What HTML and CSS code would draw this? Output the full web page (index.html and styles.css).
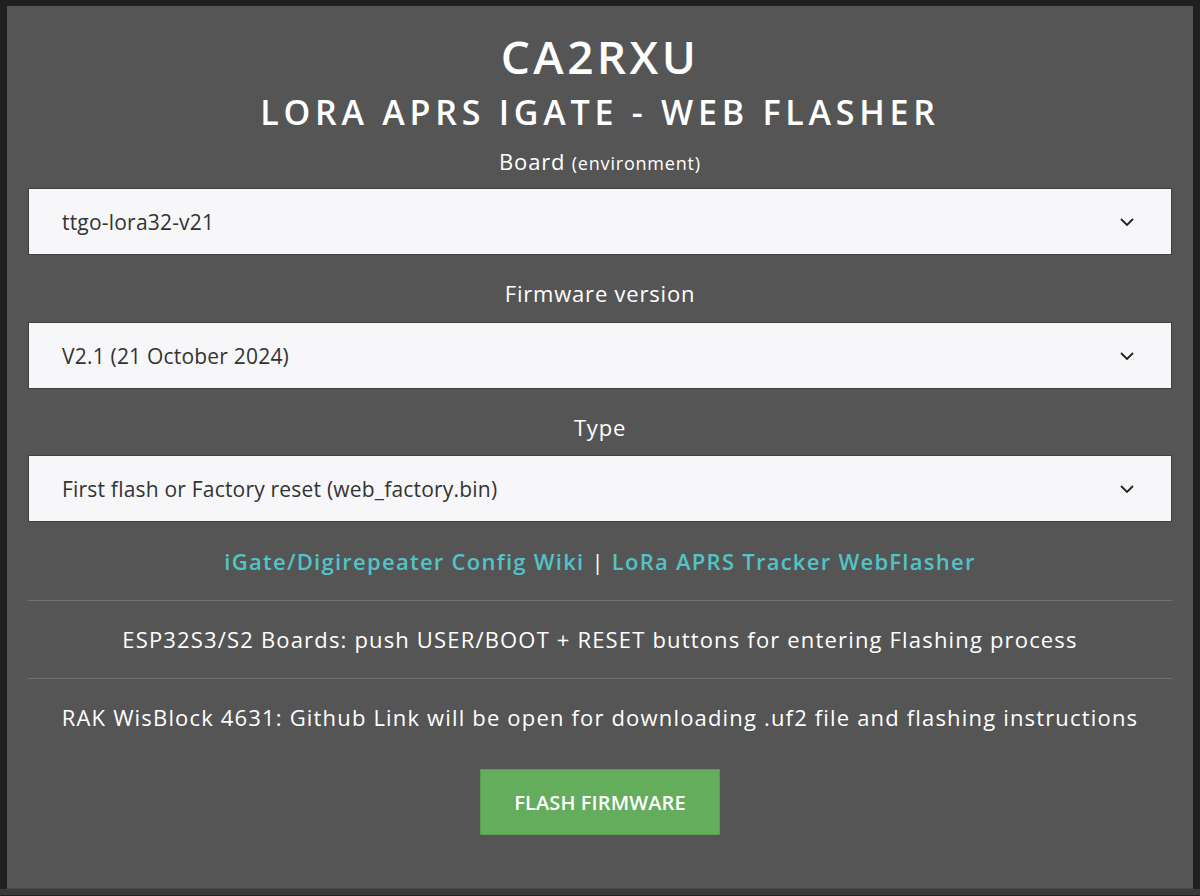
FILE: index.html
```html
<!DOCTYPE html>
<html lang="en">
<head>
<meta charset="utf-8">
<title>CA2RXU - LoRa APRS iGate - Web Flasher</title>
<link rel="stylesheet" href="styles.css">
</head>
<body>
<main class="panel">
  <h1 class="title">CA2RXU</h1>
  <h2 class="subtitle">LORA APRS IGATE - WEB FLASHER</h2>

  <label class="field-label">Board <small>(environment)</small></label>
  <div class="select">
    <span class="select-value">ttgo-lora32-v21</span>
    <svg class="chevron" width="14" height="8" viewBox="0 0 14 8"><path d="M1 1l6 6 6-6" fill="none" stroke="#222" stroke-width="1.8"/></svg>
  </div>

  <label class="field-label">Firmware version</label>
  <div class="select">
    <span class="select-value">V2.1 (21 October 2024)</span>
    <svg class="chevron" width="14" height="8" viewBox="0 0 14 8"><path d="M1 1l6 6 6-6" fill="none" stroke="#222" stroke-width="1.8"/></svg>
  </div>

  <label class="field-label">Type</label>
  <div class="select">
    <span class="select-value">First flash or Factory reset (web_factory.bin)</span>
    <svg class="chevron" width="14" height="8" viewBox="0 0 14 8"><path d="M1 1l6 6 6-6" fill="none" stroke="#222" stroke-width="1.8"/></svg>
  </div>

  <p class="links"><a href="#">iGate/Digirepeater Config Wiki</a> <span class="sep">|</span> <a href="#">LoRa APRS Tracker WebFlasher</a></p>
  <hr class="rule">
  <p class="note">ESP32S3/S2 Boards: push USER/BOOT + RESET buttons for entering Flashing process</p>
  <hr class="rule">
  <p class="note">RAK WisBlock 4631: Github Link will be open for downloading .uf2 file and flashing instructions</p>
  <div class="actions">
    <button class="flash-btn">FLASH FIRMWARE</button>
  </div>
</main>
<footer class="footer"></footer>
</body>
</html>
```
FILE: styles.css
```css
html, body {
  margin: 0;
  padding: 0;
}
body {
  background: #202020;
  font-family: "Open Sans", "Noto Sans", sans-serif;
  color: #ffffff;
  padding-top: 6px;
}
.panel {
  margin: 0 7px;
  height: 883px;
  box-sizing: border-box;
  background: #555555;
  border-bottom: 1px solid #484848;
  padding: 22px 21px 0;
  display: flex;
  flex-direction: column;
}
.title {
  margin: 0;
  font-size: 46px;
  line-height: 56px;
  font-weight: 600;
  letter-spacing: 3.4px;
  text-align: center;
}
.subtitle {
  margin: 6px 0 0;
  font-size: 34px;
  line-height: 44px;
  font-weight: 600;
  letter-spacing: 4.75px;
  text-align: center;
}
.field-label {
  display: block;
  margin: 24px 0 14px;
  height: 28px;
  font-size: 22px;
  line-height: 28px;
  text-align: center;
  letter-spacing: 0.8px;
}
.subtitle + .field-label {
  margin-top: 13px;
  margin-bottom: 13px;
}
.field-label small {
  font-size: 18px;
  line-height: 1;
}
.select {
  height: 67px;
  flex-shrink: 0;
  box-sizing: border-box;
  background: #f7f7f9;
  border: 1px solid #3f3f3f;
  display: flex;
  align-items: center;
  justify-content: space-between;
  padding: 0 37px 0 33px;
  color: #333333;
  font-size: 21px;
  letter-spacing: 0.2px;
}
.select:nth-of-type(2) {
  margin-top: 1px;
}
.chevron {
  display: block;
}
.links {
  margin: 24px 0 0;
  font-size: 22px;
  line-height: 30px;
  font-weight: 600;
  text-align: center;
  letter-spacing: 1.26px;
}
.links a {
  color: #52c3c8;
  text-decoration: none;
}
.sep {
  color: #ffffff;
  font-weight: 400;
}
.rule {
  margin: 24px 0 0;
  border: 0;
  height: 1px;
  flex-shrink: 0;
  background: #6f6f6f;
}
.note {
  margin: 24px 0 0;
  font-size: 22px;
  line-height: 29px;
  text-align: center;
  letter-spacing: 1.17px;
}
.actions {
  margin-top: 37px;
  display: flex;
  justify-content: center;
}
.flash-btn {
  width: 240px;
  height: 66px;
  padding: 0;
  background: #64ad5d;
  color: #ffffff;
  border: 1px solid #5a9c54;
  font-family: inherit;
  font-size: 20px;
  font-weight: 600;
  letter-spacing: 0.1px;
}
.footer {
  height: 6px;
  background: #393939;
}
```
